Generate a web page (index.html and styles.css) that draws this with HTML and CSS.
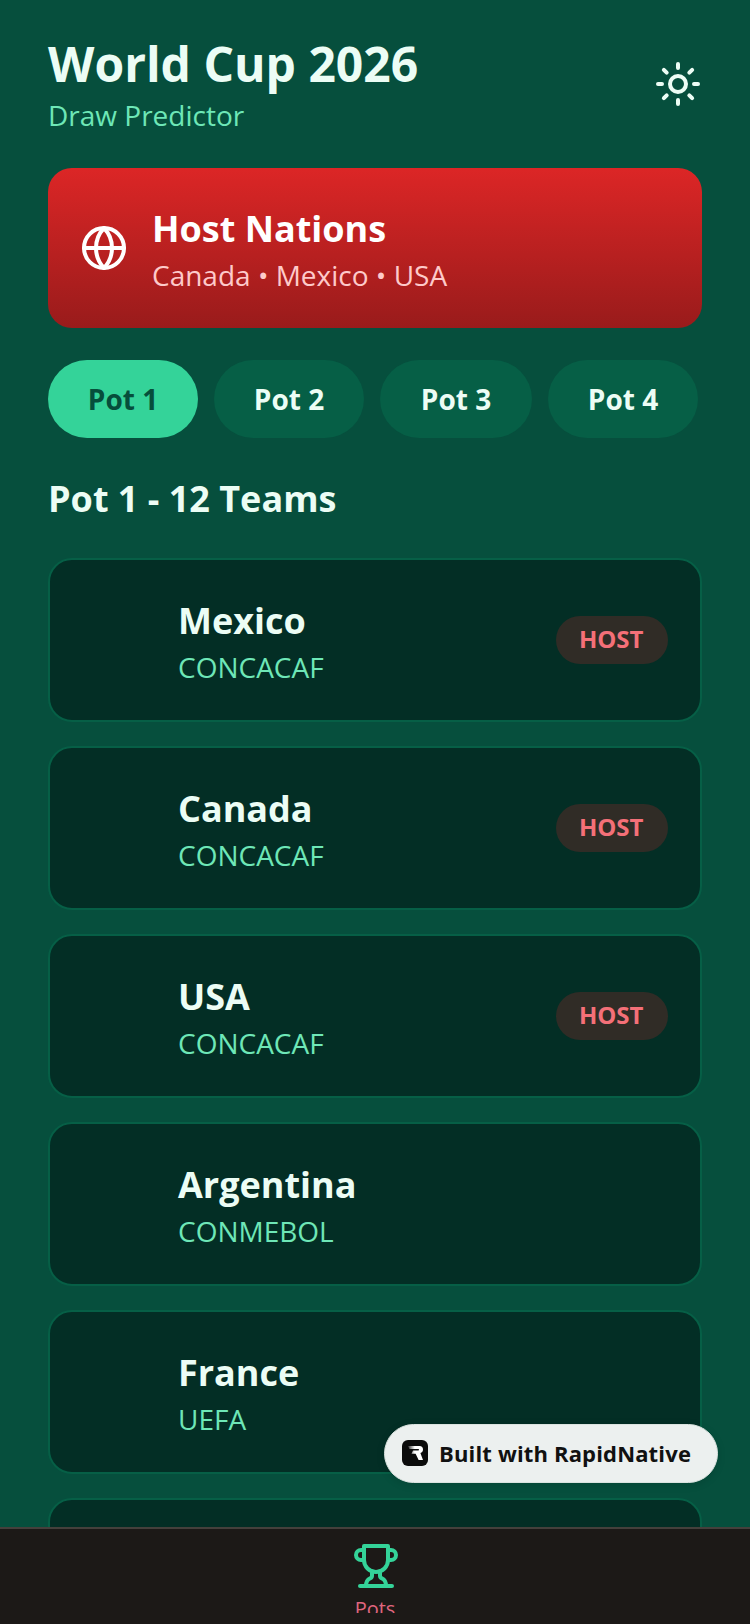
FILE: index.html
```html
<!DOCTYPE html>
<html lang="en">
<head>
<meta charset="utf-8">
<title>World Cup 2026</title>
<link rel="stylesheet" href="styles.css">
</head>
<body>
<div class="app">
  <main class="main">
    <header class="header">
      <div>
        <h1 class="title">World Cup 2026</h1>
        <p class="subtitle">Draw Predictor</p>
      </div>
      <svg class="icon sun" viewBox="0 0 24 24"><circle cx="12" cy="12" r="4"/><path d="M12 2v2M12 20v2M4.93 4.93l1.41 1.41M17.66 17.66l1.41 1.41M2 12h2M20 12h2M6.34 17.66l-1.41 1.41M19.07 4.93l-1.41 1.41"/></svg>
    </header>
    <section class="hosts">
      <svg class="icon globe" viewBox="0 0 24 24"><circle cx="12" cy="12" r="10"/><path d="M12 2a14.5 14.5 0 0 0 0 20 14.5 14.5 0 0 0 0-20"/><path d="M2 12h20"/></svg>
      <div class="hosts-text">
        <h2 class="hosts-title">Host Nations</h2>
        <p class="hosts-list">Canada • Mexico • USA</p>
      </div>
    </section>
    <nav class="pots">
      <span class="pot pot-active">Pot 1</span>
      <span class="pot">Pot 2</span>
      <span class="pot pot-wide">Pot 3</span>
      <span class="pot">Pot 4</span>
    </nav>
    <h2 class="section-title">Pot 1 - 12 Teams</h2>
    <ul class="teams">
      <li class="team"><span class="flag"></span><div class="team-info"><div class="team-name">Mexico</div><div class="team-region">CONCACAF</div></div><span class="tag">HOST</span></li>
      <li class="team"><span class="flag"></span><div class="team-info"><div class="team-name">Canada</div><div class="team-region">CONCACAF</div></div><span class="tag">HOST</span></li>
      <li class="team"><span class="flag"></span><div class="team-info"><div class="team-name">USA</div><div class="team-region">CONCACAF</div></div><span class="tag">HOST</span></li>
      <li class="team"><span class="flag"></span><div class="team-info"><div class="team-name">Argentina</div><div class="team-region">CONMEBOL</div></div></li>
      <li class="team"><span class="flag"></span><div class="team-info"><div class="team-name">France</div><div class="team-region">UEFA</div></div></li>
      <li class="team"></li>
    </ul>
  </main>
  <footer class="tabbar">
    <div class="tab">
      <svg class="icon trophy" viewBox="0 0 24 24"><path d="M6 9H4.500a2.500 2.500 0 0 1 0-5H6"/><path d="M18 9h1.500a2.500 2.500 0 0 0 0-5H18"/><path d="M4 22h16"/><path d="M10 14.660V17c0 .55-.47.98-.97 1.210C7.850 18.750 7 20.240 7 22"/><path d="M14 14.660V17c0 .55.47.98.97 1.210C16.150 18.750 17 20.240 17 22"/><path d="M18 2H6v7a6 6 0 0 0 12 0V2Z"/></svg>
      <span class="tab-label">Pots</span>
    </div>
  </footer>
  <div class="badge">
    <svg class="logo" viewBox="0 0 26 26"><defs><linearGradient id="logo-fade" x1="0" x2="1" y1="0" y2="0"><stop offset="0" stop-color="#fff" stop-opacity=".15"/><stop offset=".45" stop-color="#fff"/></linearGradient></defs><rect width="26" height="26" rx="6" fill="#0b0b0b"/><path d="M6 6h11.500C19.800 6 21 7.400 21 9.500c0 1.800-.9 3.100-2.600 3.600L21 20h-4.400l-3-6.300H9.500L11 10.500h5.200c.6 0 .9-.3.9-.7s-.3-.7-.9-.7H7.500z" fill="url(#logo-fade)"/></svg>
    <span class="badge-text">Built with RapidNative</span>
  </div>
</div>
</body>
</html>
```
FILE: styles.css
```css
* { box-sizing: border-box; }
html, body { margin: 0; padding: 0; }
body { font-family: "Open Sans", sans-serif; background: #064f3d; }
h1, h2, p, ul { margin: 0; padding: 0; }
ul { list-style: none; }

.app { position: relative; width: 750px; height: 1624px; display: flex; flex-direction: column; overflow: hidden; background: #064f3d; }
.main { flex: 1; min-height: 0; overflow: hidden; padding: 32px 48px 0; }

.icon { fill: none; stroke: currentColor; stroke-width: 2; stroke-linecap: round; stroke-linejoin: round; flex: none; }

.header { display: flex; justify-content: space-between; align-items: center; }
.title { font-size: 48px; line-height: 64px; font-weight: 700; color: #ecfdf5; }
.subtitle { font-size: 28px; line-height: 38px; margin-bottom: 2px; color: #6ee7b7; }
.sun { width: 48px; height: 48px; color: #ecfdf5; }

.hosts { margin-top: 32px; height: 160px; padding: 0 32px; border-radius: 24px; display: flex; align-items: center; gap: 24px; background: linear-gradient(180deg, #dc2626, #991b1b); }
.globe { width: 48px; height: 48px; color: #fff; }
.hosts-text { padding-top: 3px; }
.hosts-title { font-size: 36px; line-height: 50px; font-weight: 700; color: #fff; }
.hosts-list { font-size: 28px; line-height: 40px; margin-top: 1px; color: #fecaca; }

.pots { margin-top: 32px; display: flex; gap: 16px; }
.pot { width: 150px; height: 78px; border-radius: 39px; display: flex; align-items: center; justify-content: center; font-size: 28px; font-weight: 700; color: #ecfdf5; background: #065f46; }
.pot-wide { width: 152px; }
.pot-active { background: #34d399; color: #064e3b; }

.section-title { margin-top: 37px; font-size: 36px; line-height: 48px; font-weight: 700; color: #ecfdf5; }

.teams { margin-top: 35px; display: flex; flex-direction: column; gap: 24px; }
.team { height: 164px; flex: none; padding: 0 32px; display: flex; align-items: center; gap: 16px; border: 2px solid #065f46; border-radius: 24px; background: #032e25; }
.flag { width: 80px; height: 80px; flex: none; }
.team-info { flex: 1; padding-top: 3px; }
.team-name { font-size: 36px; line-height: 50px; font-weight: 700; color: #ecfdf5; }
.team-region { font-size: 28px; line-height: 40px; margin-top: 1px; color: #6ee7b7; }
.tag { height: 48px; padding: 0 24.5px 2px 22.5px; border-radius: 24px; display: flex; align-items: center; font-size: 24px; line-height: 46px; font-weight: 700; color: #f47078; background: #302c26; }

.tabbar { flex: none; height: 97px; border-top: 2px solid #44403c; background: #1c1917; display: flex; justify-content: center; overflow: hidden; }
.tab { height: 84px; margin-left: 1px; display: flex; flex-direction: column; align-items: center; overflow: hidden; padding-top: 13px; }
.trophy { width: 48px; height: 48px; color: #34d399; margin-left: 1px; }
.tab-label { font-size: 20px; line-height: 28px; margin-top: 5px; margin-right: 1px; color: #e0667f; }

.badge { position: absolute; left: 384px; top: 1424px; width: 334px; height: 59px; padding: 0 17px 1px; display: flex; align-items: center; gap: 11px; border-radius: 30px; background: #ecf0ef; border: 1px solid #dbe3e0; box-shadow: 0 2px 8px rgba(0,0,0,.12); }
.logo { width: 26px; height: 26px; flex: none; }
.badge-text { font-size: 22px; font-weight: 700; letter-spacing: .16px; color: #111; white-space: nowrap; }
```
